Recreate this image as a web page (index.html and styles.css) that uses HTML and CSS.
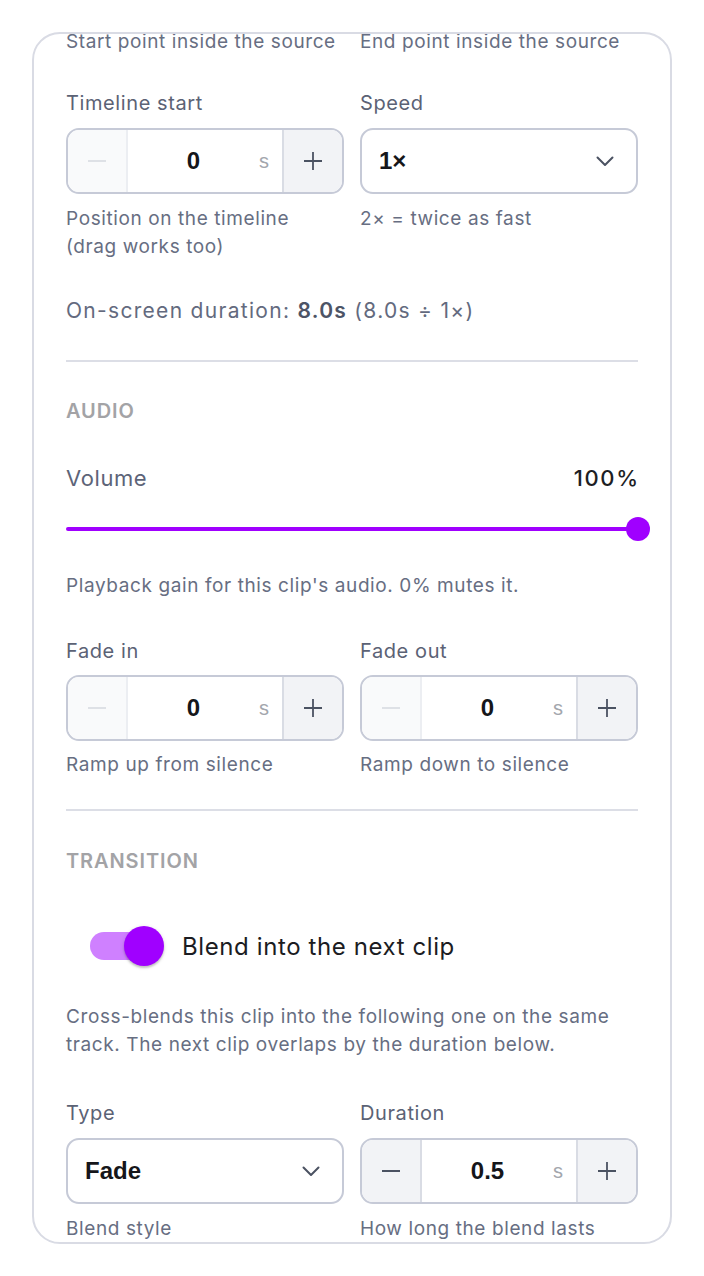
FILE: index.html
```html
<!DOCTYPE html>
<html lang="en">
<head>
<meta charset="utf-8">
<title>Clip inspector</title>
<link rel="stylesheet" href="styles.css">
</head>
<body>
<div class="card">
  <div class="content">
    <div class="grid2 top-help">
      <p class="help">Start point inside the source</p>
      <p class="help">End point inside the source</p>
    </div>

    <div class="grid2 fields">
      <div class="field">
        <label class="label">Timeline start</label>
        <div class="stepper">
          <button class="step-btn disabled" aria-label="decrease">
            <svg width="20" height="20" viewBox="0 0 20 20"><path d="M1 10h18" stroke="currentColor" stroke-width="1.6"/></svg>
          </button>
          <div class="step-value"><span class="num">0</span><span class="unit">s</span></div>
          <button class="step-btn" aria-label="increase">
            <svg width="20" height="20" viewBox="0 0 20 20"><path d="M1 10h18M10 1v18" stroke="currentColor" stroke-width="1.8"/></svg>
          </button>
        </div>
        <p class="help">Position on the timeline (drag works too)</p>
      </div>
      <div class="field">
        <label class="label">Speed</label>
        <div class="select">
          <span class="sel-val">1×</span>
          <svg class="chev" width="18" height="11" viewBox="0 0 18 11"><path d="M1.5 1.5l7.5 7.5 7.5-7.5" fill="none" stroke="currentColor" stroke-width="2" stroke-linecap="round" stroke-linejoin="round"/></svg>
        </div>
        <p class="help">2× = twice as fast</p>
      </div>
    </div>

    <p class="summary">On-screen duration: <b>8.0s</b> (8.0s ÷ 1×)</p>

    <hr class="divider">

    <h3 class="section">Audio</h3>

    <div class="vol-row">
      <span class="vol-label">Volume</span>
      <span class="vol-val">100%</span>
    </div>
    <div class="slider">
      <div class="track"></div>
      <div class="thumb"></div>
    </div>
    <p class="help slider-help">Playback gain for this clip's audio. 0% mutes it.</p>

    <div class="grid2 fields fade">
      <div class="field">
        <label class="label">Fade in</label>
        <div class="stepper">
          <button class="step-btn disabled" aria-label="decrease">
            <svg width="20" height="20" viewBox="0 0 20 20"><path d="M1 10h18" stroke="currentColor" stroke-width="1.6"/></svg>
          </button>
          <div class="step-value"><span class="num">0</span><span class="unit">s</span></div>
          <button class="step-btn" aria-label="increase">
            <svg width="20" height="20" viewBox="0 0 20 20"><path d="M1 10h18M10 1v18" stroke="currentColor" stroke-width="1.8"/></svg>
          </button>
        </div>
        <p class="help">Ramp up from silence</p>
      </div>
      <div class="field">
        <label class="label">Fade out</label>
        <div class="stepper">
          <button class="step-btn disabled" aria-label="decrease">
            <svg width="20" height="20" viewBox="0 0 20 20"><path d="M1 10h18" stroke="currentColor" stroke-width="1.6"/></svg>
          </button>
          <div class="step-value"><span class="num">0</span><span class="unit">s</span></div>
          <button class="step-btn" aria-label="increase">
            <svg width="20" height="20" viewBox="0 0 20 20"><path d="M1 10h18M10 1v18" stroke="currentColor" stroke-width="1.8"/></svg>
          </button>
        </div>
        <p class="help">Ramp down to silence</p>
      </div>
    </div>

    <hr class="divider divider2">

    <h3 class="section section2">Transition</h3>

    <div class="toggle-row">
      <span class="switch"><span class="switch-track"></span><span class="switch-thumb"></span></span>
      <span class="toggle-label">Blend into the next clip</span>
    </div>

    <p class="help blend-help">Cross-blends this clip into the following one on the same track. The next clip overlaps by the duration below.</p>

    <div class="grid2 fields trans">
      <div class="field">
        <label class="label">Type</label>
        <div class="select">
          <span class="sel-val">Fade</span>
          <svg class="chev" width="18" height="11" viewBox="0 0 18 11"><path d="M1.5 1.5l7.5 7.5 7.5-7.5" fill="none" stroke="currentColor" stroke-width="2" stroke-linecap="round" stroke-linejoin="round"/></svg>
        </div>
        <p class="help">Blend style</p>
      </div>
      <div class="field">
        <label class="label">Duration</label>
        <div class="stepper">
          <button class="step-btn" aria-label="decrease">
            <svg width="20" height="20" viewBox="0 0 20 20"><path d="M1 10h18" stroke="currentColor" stroke-width="1.8"/></svg>
          </button>
          <div class="step-value"><span class="num">0.5</span><span class="unit">s</span></div>
          <button class="step-btn" aria-label="increase">
            <svg width="20" height="20" viewBox="0 0 20 20"><path d="M1 10h18M10 1v18" stroke="currentColor" stroke-width="1.8"/></svg>
          </button>
        </div>
        <p class="help">How long the blend lasts</p>
      </div>
    </div>
  </div>
</div>
</body>
</html>
```

FILE: styles.css
```css
* { box-sizing: border-box; }

html, body {
  margin: 0;
  padding: 0;
  background: #ffffff;
}

body {
  padding: 32px;
  height: 1276px;
  font-family: Inter, "Noto Sans", sans-serif;
  color: #5d6478;
}

p, h3 { margin: 0; }

.card {
  height: 1212px;
  border: 2px solid #d9dbe4;
  border-radius: 28px;
  overflow: hidden;
  padding: 0 32px;
}

.content {
  margin-top: -6px;
}

.grid2 {
  display: grid;
  grid-template-columns: 1fr 1fr;
  column-gap: 16px;
}

.help {
  font-size: 19px;
  letter-spacing: 0.6px;
  line-height: 28px;
  color: #676e82;
}

.fields { margin-top: 33px; }

.field { display: flex; flex-direction: column; }

.label {
  font-size: 20px;
  letter-spacing: 0.6px;
  line-height: 28px;
  color: #5b6275;
  margin-bottom: 11px;
}

.field .help { margin-top: 11px; }

.stepper {
  display: flex;
  height: 66px;
  border: 2px solid #c6cad7;
  border-radius: 13px;
  overflow: hidden;
}

.step-btn {
  width: 60px;
  flex: none;
  border: 0;
  padding: 0;
  margin: 0;
  background: #f2f3f6;
  color: #4b5262;
  display: flex;
  align-items: center;
  justify-content: center;
}

.step-btn:first-child { border-right: 2px solid #d9dce4; }
.step-btn:last-child { border-left: 2px solid #d9dce4; }

.step-btn.disabled {
  background: #f9fafb;
  color: #d5d8df;
}
.step-btn.disabled:first-child { border-right-color: #eceef2; }

.step-value {
  flex: 1;
  display: flex;
  align-items: center;
  background: #fff;
}

.num {
  flex: 1;
  text-align: center;
  font-family: "Liberation Sans", Arial, sans-serif;
  font-weight: 700;
  font-size: 24px;
  color: #15161a;
}

.unit {
  font-family: "Liberation Sans", Arial, sans-serif;
  font-size: 20px;
  color: #a3a6ad;
  padding-right: 13px;
}

.select {
  display: flex;
  align-items: center;
  justify-content: space-between;
  height: 66px;
  border: 2px solid #c6cad7;
  border-radius: 13px;
  padding: 0 22px 0 17px;
  background: #fff;
}

.sel-val {
  font-family: "Liberation Sans", Arial, sans-serif;
  font-weight: 700;
  font-size: 24px;
  color: #15161a;
}

.chev { color: #4b5262; }

.summary {
  margin-top: 36px;
  font-size: 21px;
  letter-spacing: 1.3px;
  line-height: 28px;
  color: #636a7e;
}
.summary b { font-weight: 600; color: #4d5466; }

.divider {
  margin: 35px 0 0;
  border: 0;
  border-top: 2px solid #dcdee6;
}

.section {
  margin-top: 35px;
  font-size: 20px;
  line-height: 28px;
  font-weight: 600;
  letter-spacing: 0.9px;
  text-transform: uppercase;
  color: #a3a3a6;
}

.vol-row {
  margin-top: 39px;
  display: flex;
  justify-content: space-between;
  font-size: 22px;
  letter-spacing: 0.6px;
  line-height: 28px;
}
.vol-label { color: #5d6478; }
.vol-val { color: #1d1e24; font-weight: 500; letter-spacing: 1.6px; margin-right: -1.6px; }

.slider {
  position: relative;
  height: 48px;
  margin-top: 13px;
  display: flex;
  align-items: center;
}
.track {
  flex: 1;
  height: 4px;
  border-radius: 2px;
  background: #a000ff;
}
.thumb {
  position: absolute;
  right: -12px;
  top: 12px;
  width: 24px;
  height: 24px;
  border-radius: 50%;
  background: #a000ff;
}

.slider-help { margin-top: 19px; }

.fade { margin-top: 37px; }
.fade .label { margin-bottom: 10px; }
.fade .help { margin-top: 10px; }

.divider2 { margin-top: 30px; }
.section2 { margin-top: 36px; }

.toggle-row {
  margin-top: 47px;
  display: flex;
  align-items: center;
  padding-left: 24px;
  height: 48px;
}

.switch {
  position: relative;
  width: 74px;
  height: 40px;
  flex: none;
  display: flex;
  align-items: center;
}
.switch-track {
  width: 70px;
  height: 28px;
  border-radius: 14px;
  background: #cf80ff;
}
.switch-thumb {
  position: absolute;
  left: 34px;
  top: 0;
  width: 40px;
  height: 40px;
  border-radius: 50%;
  background: #a000ff;
  box-shadow: 0 2px 2px rgba(0,0,0,0.18), 0 1px 4px rgba(0,0,0,0.12);
}

.toggle-label {
  margin-left: 18px;
  font-size: 24px;
  letter-spacing: 0.6px;
  color: #1b1c22;
}

.blend-help { margin-top: 33px; }

.trans { margin-top: 40px; }
.trans .label { margin-bottom: 11px; }
.trans .help { margin-top: 11px; }
```
